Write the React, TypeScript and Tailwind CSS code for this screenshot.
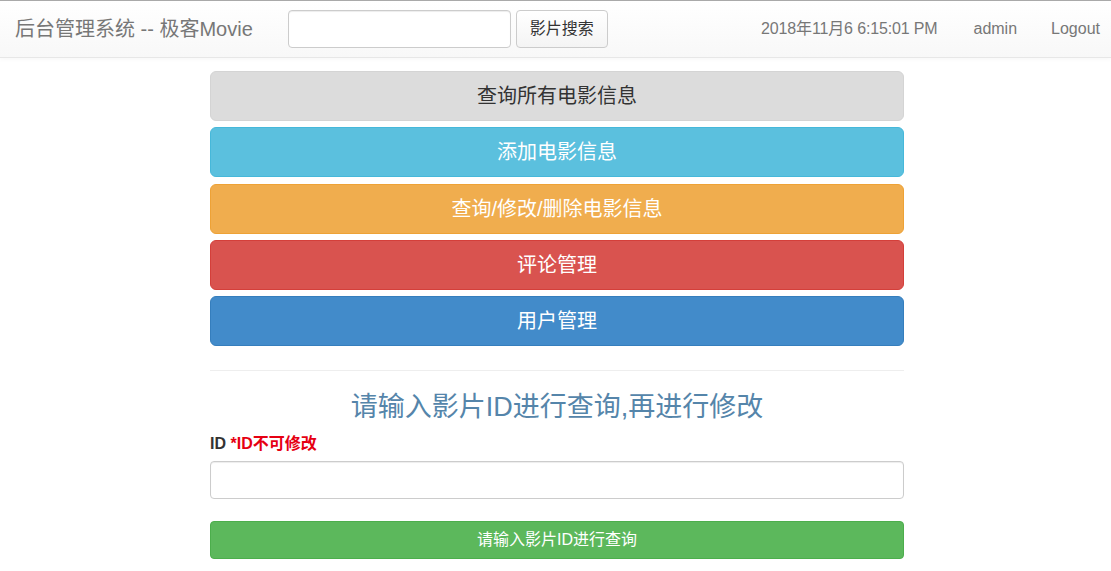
import React, { useState } from 'react';

const font = "font-['Liberation_Sans','Noto_Sans_CJK_SC',sans-serif]";

// 菜单按钮
const menuButtons = [
  { label: '查询所有电影信息', cls: 'bg-[#dcdcdc] border-[#d4d4d4] text-[#333]' },
  { label: '添加电影信息', cls: 'bg-[#5bc0de] border-[#46b8da] text-white' },
  { label: '查询/修改/删除电影信息', cls: 'bg-[#f0ad4e] border-[#eea236] text-white' },
  { label: '评论管理', cls: 'bg-[#d9534f] border-[#d43f3a] text-white' },
  { label: '用户管理', cls: 'bg-[#428bca] border-[#357ebd] text-white' },
];

const Navbar: React.FC = () => (
  <nav className="h-[58px] border-t border-t-[#a9a9a9] border-b border-b-[#e7e7e7] bg-gradient-to-b from-white to-[#f8f8f8] shadow-[0_1px_5px_rgba(0,0,0,0.04)] flex items-center pl-[15px] pr-[11px]">
    <span className="text-[20px] text-[#777] leading-none">后台管理系统 -- 极客Movie</span>
    <form className="flex items-center ml-[35px] gap-[5px]" onSubmit={(e) => e.preventDefault()}>
      <input
        type="text"
        className="w-[223px] h-[38px] border border-[#ccc] rounded-[4px] bg-white px-3 text-[14px] outline-none shadow-[inset_0_1px_1px_rgba(0,0,0,0.075)]"
      />
      <button
        type="submit"
        className="h-[38px] w-[92px] border border-[#ccc] rounded-[4px] bg-gradient-to-b from-white to-[#f4f4f4] text-[16px] text-[#333]"
      >
        影片搜索
      </button>
    </form>
    <div className="ml-auto flex items-center text-[16px] text-[#777]">
      <span className="mr-[36px] tracking-[-0.15px]">2018年11月6 6:15:01 PM</span>
      <a className="mr-[34px]">admin</a>
      <a>Logout</a>
    </div>
  </nav>
);

export default function App() {
  const [movieId, setMovieId] = useState('');

  return (
    <div className={`${font} min-h-[571px] bg-white text-[#333]`}>
      <Navbar />
      <div className="w-[694px] ml-[210px] pt-[13px]">
        <div className="flex flex-col gap-[6.25px]">
          {menuButtons.map((b) => (
            <button
              key={b.label}
              className={`h-[50px] w-full border rounded-[6px] text-[20px] ${b.cls}`}
            >
              {b.label}
            </button>
          ))}
        </div>

        <hr className="mt-[24px] border-t border-[#eee]" />

        <h2 className="mt-[18px] text-center text-[27px] leading-[36px] text-[#5585aa]">
          请输入影片ID进行查询,再进行修改
        </h2>

        <label className="block mt-[8px] text-[16px] font-bold leading-[22px]">
          ID <span className="text-[#e60012]">*ID不可修改</span>
        </label>
        <input
          type="text"
          value={movieId}
          onChange={(e) => setMovieId(e.target.value)}
          className="block mt-[6px] w-full h-[38px] border border-[#ccc] rounded-[4px] px-3 text-[14px] outline-none shadow-[inset_0_1px_1px_rgba(0,0,0,0.075)]"
        />

        <button className="block mt-[22px] w-full h-[38px] rounded-[4px] border border-[#4cae4c] bg-[#5cb85c] text-white text-[16px]">
          请输入影片ID进行查询
        </button>
      </div>
    </div>
  );
}
